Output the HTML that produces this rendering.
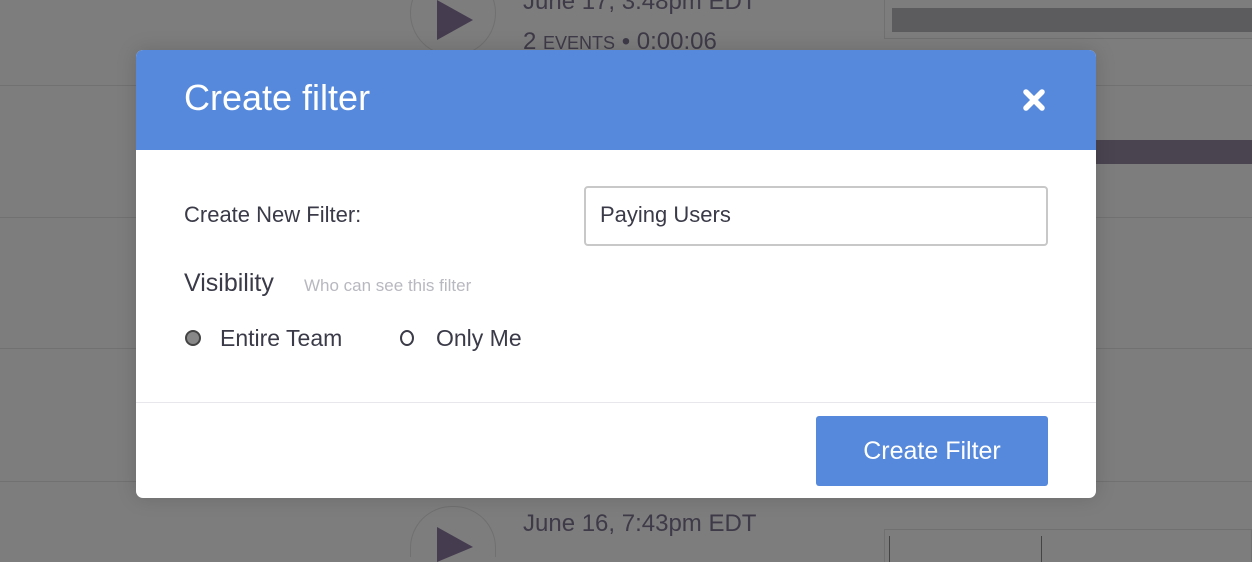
<!DOCTYPE html>
<html style="margin:0;width:1252px;height:562px;overflow:hidden;background:#7d7d7d"><head><style>
body{margin:0;width:1252px;height:562px;overflow:hidden;background:#7d7d7d;font-family:"Liberation Sans",sans-serif;position:relative}
.hl{position:absolute;left:0;height:1px;background:#717171;width:1252px}
.bg{position:absolute}
.modal{position:absolute;left:136px;top:50px;width:960px;height:448px;background:#fff;border-radius:7px;overflow:hidden;box-shadow:0 0 20px rgba(0,0,0,.15)}
.hdr{height:100px;background:#5689db;position:relative}
.hdr h1{margin:0;position:absolute;left:48px;top:27px;font-weight:normal;color:#fff;font-size:36px}
.lbl{position:absolute;color:#3a3a48;font-size:22px}
</style></head><body>
<div class="hl" style="top:85px"></div>
<div class="hl" style="top:217px"></div>
<div class="hl" style="top:348px"></div>
<div class="hl" style="top:481px"></div>
<div class="bg" style="left:410px;top:-30px;width:84px;height:84px;border:1px solid #707070;border-radius:50%"></div>
<div class="bg" style="left:437px;top:0;width:0;height:0;border-left:36px solid #453c50;border-top:20px solid transparent;border-bottom:20px solid transparent"></div>
<div class="bg" style="left:523px;top:-12px;color:#3f3a48;font-size:24px">June 17, 3:48pm EDT</div>
<div class="bg" style="left:523px;top:28px;color:#3f3a48;font-size:24px">2 <span style="font-size:18px">EVENTS</span> • 0:00:06</div>
<div class="bg" style="left:884px;top:0;width:368px;height:38px;border:1px solid #707070;border-top:none"></div>
<div class="bg" style="left:892px;top:8px;width:360px;height:24px;background:#5c5c5e"></div>
<div class="bg" style="left:1096px;top:140px;width:156px;height:24px;background:#4a4450"></div>
<div class="bg" style="left:410px;top:506px;width:84px;height:50px;border:1px solid #707070;border-bottom:none;border-radius:42px 42px 0 0"></div>
<div class="bg" style="left:437px;top:527px;width:0;height:0;border-left:36px solid #453c50;border-top:20px solid transparent;border-bottom:15px solid transparent"></div>
<div class="bg" style="left:523px;top:510px;color:#3f3a48;font-size:24px">June 16, 7:43pm EDT</div>
<div class="bg" style="left:884px;top:529px;width:368px;height:33px;border:1px solid #707070;border-bottom:none;box-sizing:border-box"></div>
<div class="bg" style="left:889px;top:536px;width:1px;height:26px;background:#444"></div>
<div class="bg" style="left:1041px;top:536px;width:1px;height:26px;background:#444"></div>
<div class="modal">
 <div class="hdr"><h1>Create filter</h1>
  <svg style="position:absolute;left:885px;top:37px" width="26" height="26" viewBox="0 0 26 26"><path d="M5 5L21 21M21 5L5 21" stroke="#fff" stroke-width="5.5" stroke-linecap="round"/></svg>
 </div>
 <div class="lbl" style="left:48px;top:152px">Create New Filter:</div>
 <div style="position:absolute;left:448px;top:136px;width:460px;height:56px;border:2px solid #c8c8c8;border-radius:4px"></div>
 <div class="lbl" style="left:464px;top:152px">Paying Users</div>
 <div class="lbl" style="left:48px;top:219px;font-size:25px">Visibility</div>
 <div class="lbl" style="left:168px;top:226px;font-size:17px;color:#b8b8c0">Who can see this filter</div>
 <div style="position:absolute;left:49px;top:280px;width:12px;height:12px;border:2px solid #444;border-radius:50%;background:#888"></div>
 <div class="lbl" style="left:84px;top:275px;font-size:23px">Entire Team</div>
 <div style="position:absolute;left:264px;top:280px;width:10px;height:12px;border:2px solid #3a3a48;border-radius:50%"></div>
 <div class="lbl" style="left:300px;top:275px;font-size:23px">Only Me</div>
 <div style="position:absolute;left:0;top:352px;width:960px;height:1px;background:#e8e8ec"></div>
 <div style="position:absolute;left:680px;top:366px;width:232px;height:70px;background:#5689db;border-radius:3px;color:#fff;font-size:25px;text-align:center;line-height:70px">Create Filter</div>
</div>
</body></html>
